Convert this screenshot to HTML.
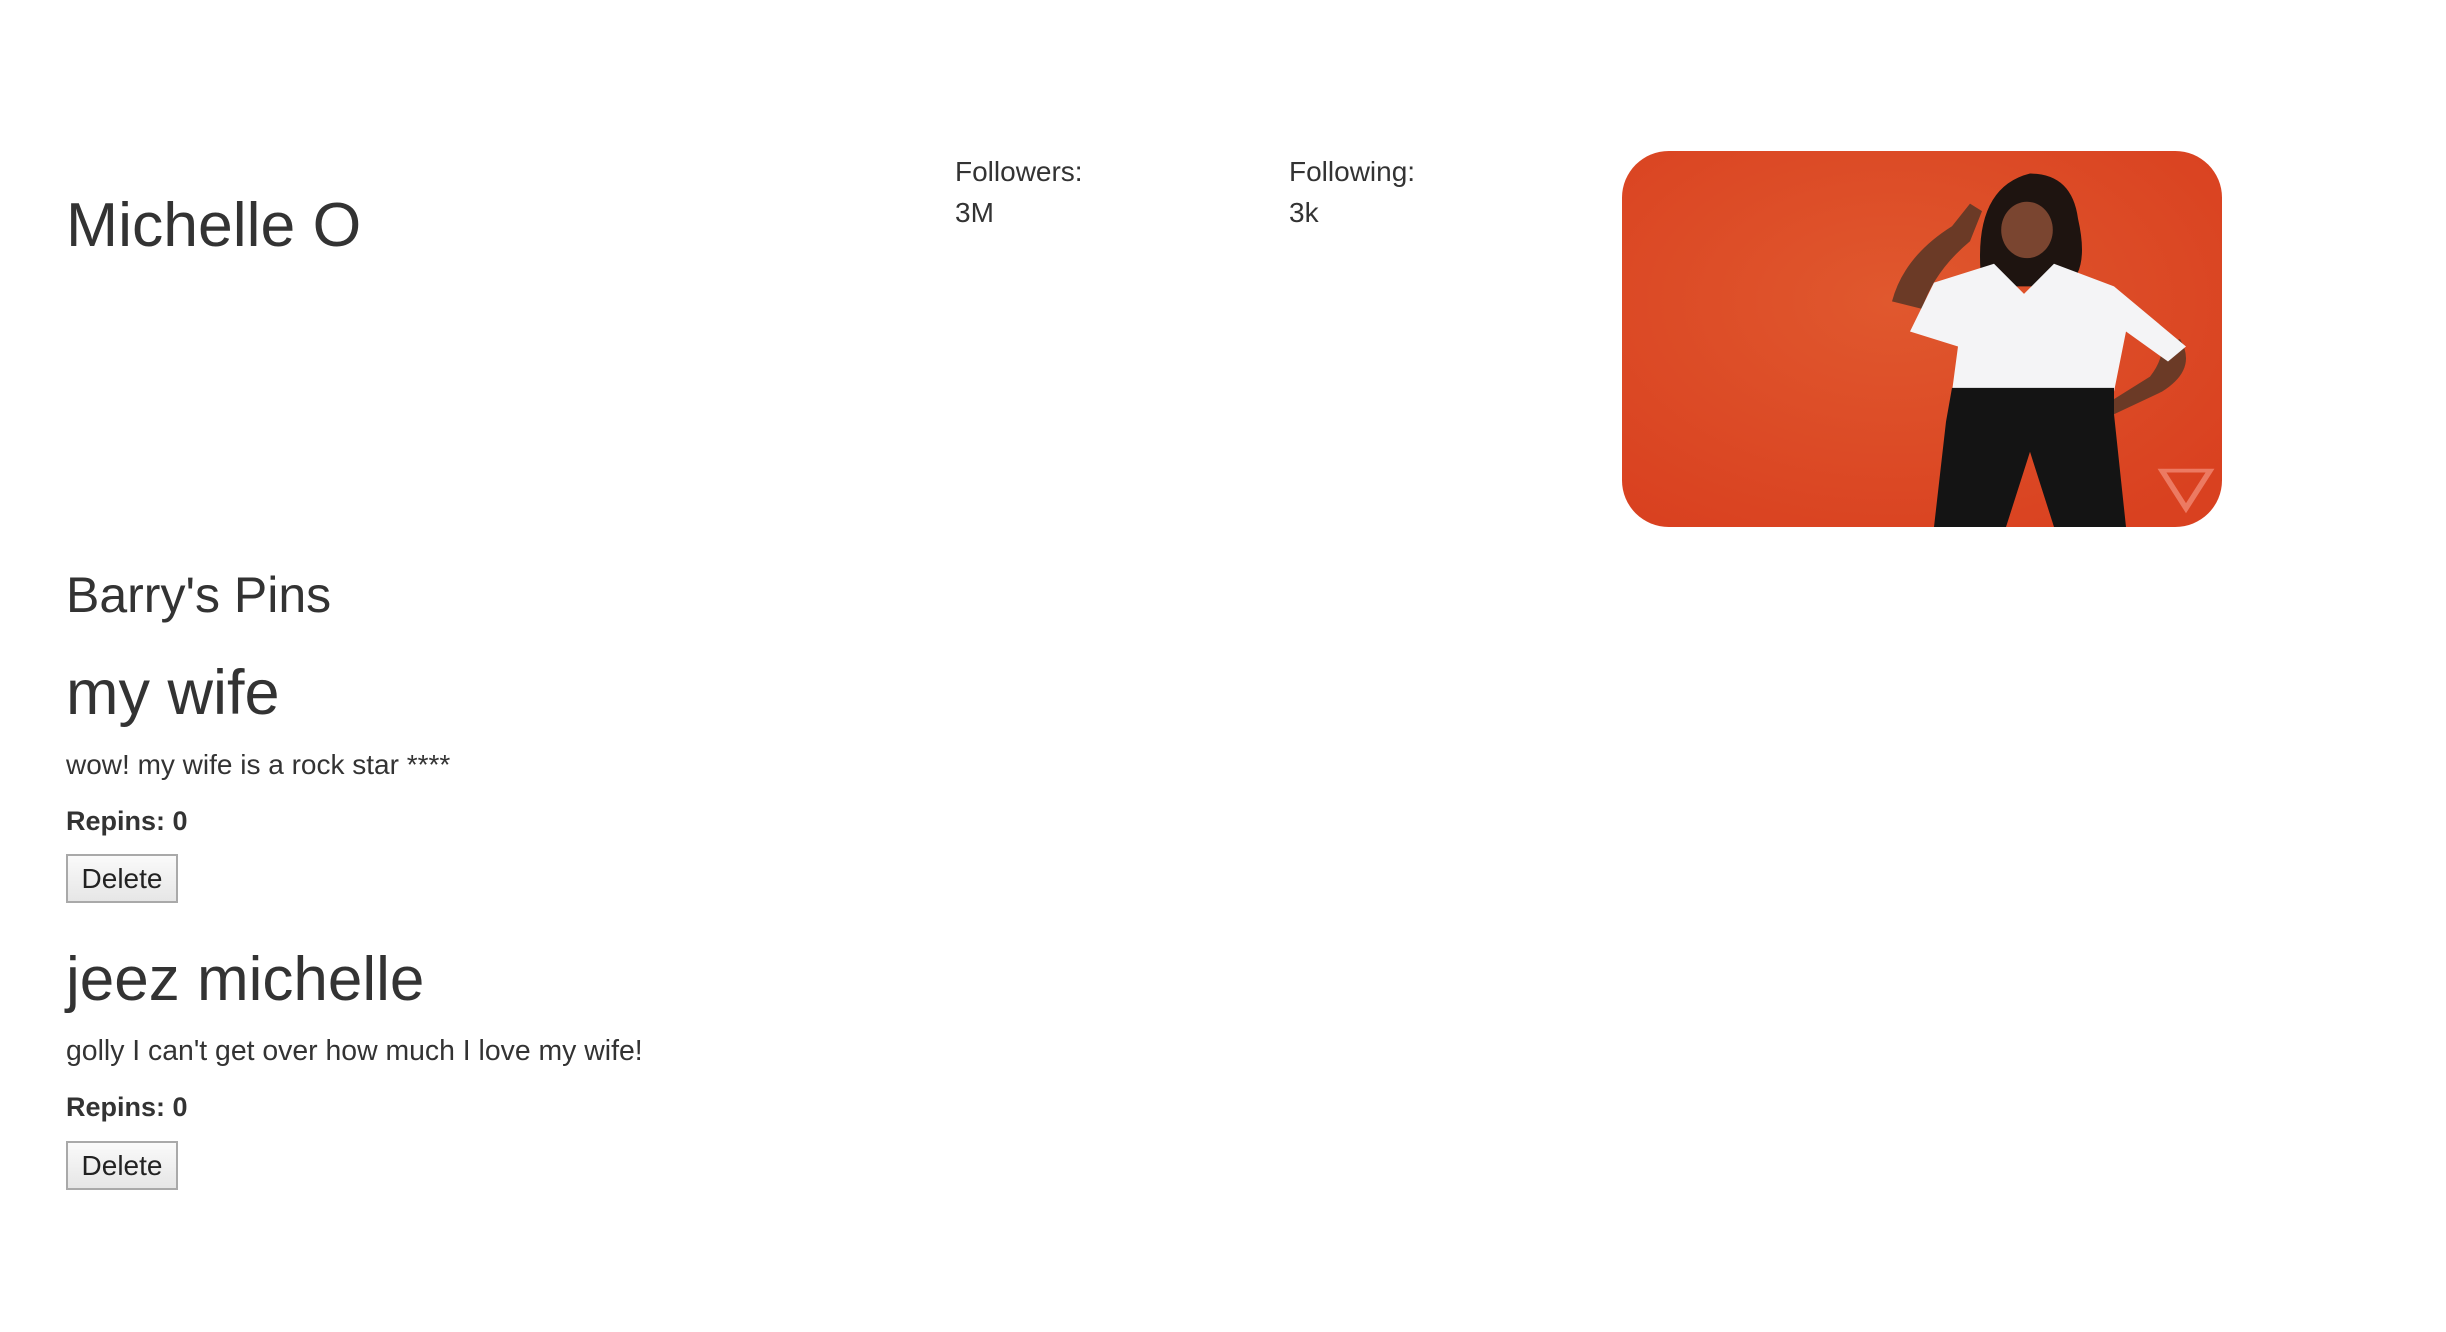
<!DOCTYPE html>
<html><head><meta charset="utf-8"><style>
body{margin:0;width:2446px;height:1332px;background:#fff;color:#333;font-family:"Liberation Sans",Arial,sans-serif;position:relative;overflow:hidden}
.a{position:absolute;white-space:nowrap;line-height:1}
.btn{position:absolute;left:66px;width:112px;height:49px;border:2px solid #a9a9a9;background:linear-gradient(#fafafa,#e6e6e6);box-sizing:border-box;font-size:28px;text-align:center;line-height:45px;color:#222}
</style></head><body>
<div class="a" style="left:66px;top:194px;font-size:62.5px">Michelle O</div>
<div class="a" style="left:955px;top:158px;font-size:28px">Followers:</div>
<div class="a" style="left:955px;top:199px;font-size:28px">3M</div>
<div class="a" style="left:1289px;top:158px;font-size:28px">Following:</div>
<div class="a" style="left:1289px;top:199px;font-size:28px">3k</div>
<svg style="position:absolute;left:1622px;top:151px" width="600" height="376" viewBox="0 0 100 100" preserveAspectRatio="none">
<defs><clipPath id="c"><rect width="100" height="100" rx="7.8" ry="12.4"/></clipPath>
<radialGradient id="g" cx="0.45" cy="0.4" r="0.7"><stop offset="0" stop-color="#e0582e"/><stop offset="1" stop-color="#d94120"/></radialGradient></defs>
<g clip-path="url(#c)">
<rect width="100" height="100" fill="url(#g)"/>
<path d="M45 40 Q47 28 55 20 L58 14 L60 16 L58 24 Q52 32 50 42 Z" fill="#6b3a26"/>
<path d="M93 50 Q96 58 90 64 L82 70 L80 68 L88 60 Q90 56 90 52 Z" fill="#6b3a26"/>
<path d="M60 36 Q58 10 68 6 Q75 6 76 18 Q78 32 74 36 Z" fill="#1e1410"/>
<ellipse cx="67.5" cy="21" rx="4.3" ry="7.5" fill="#7a4530"/>
<path d="M52 35 L62 30 L67 38 L72 30 L82 36 L94 52 L91 56 L84 48 L82 64 L55 64 L56 52 L48 48 Z" fill="#f4f4f6"/>
<path d="M55 63 L82 63 L82 70 L84 100 L72 100 L68 80 L64 100 L52 100 L54 72 Z" fill="#141414"/>
<path d="M90 85 L98 85 L94 95 Z" fill="none" stroke="#ec7a62" stroke-width="1"/>
</g></svg>
<div class="a" style="left:66px;top:570px;font-size:50px">Barry's Pins</div>
<div class="a" style="left:66px;top:662px;font-size:63px">my wife</div>
<div class="a" style="left:66px;top:751px;font-size:28px">wow! my wife is a rock star ****</div>
<div class="a" style="left:66px;top:808px;font-size:27px;font-weight:bold">Repins: 0</div>
<div class="btn" style="top:854px">Delete</div>
<div class="a" style="left:66px;top:949px;font-size:62px">jeez michelle</div>
<div class="a" style="left:66px;top:1037px;font-size:28.4px">golly I can't get over how much I love my wife!</div>
<div class="a" style="left:66px;top:1094px;font-size:27px;font-weight:bold">Repins: 0</div>
<div class="btn" style="top:1141px">Delete</div>
</body></html>
